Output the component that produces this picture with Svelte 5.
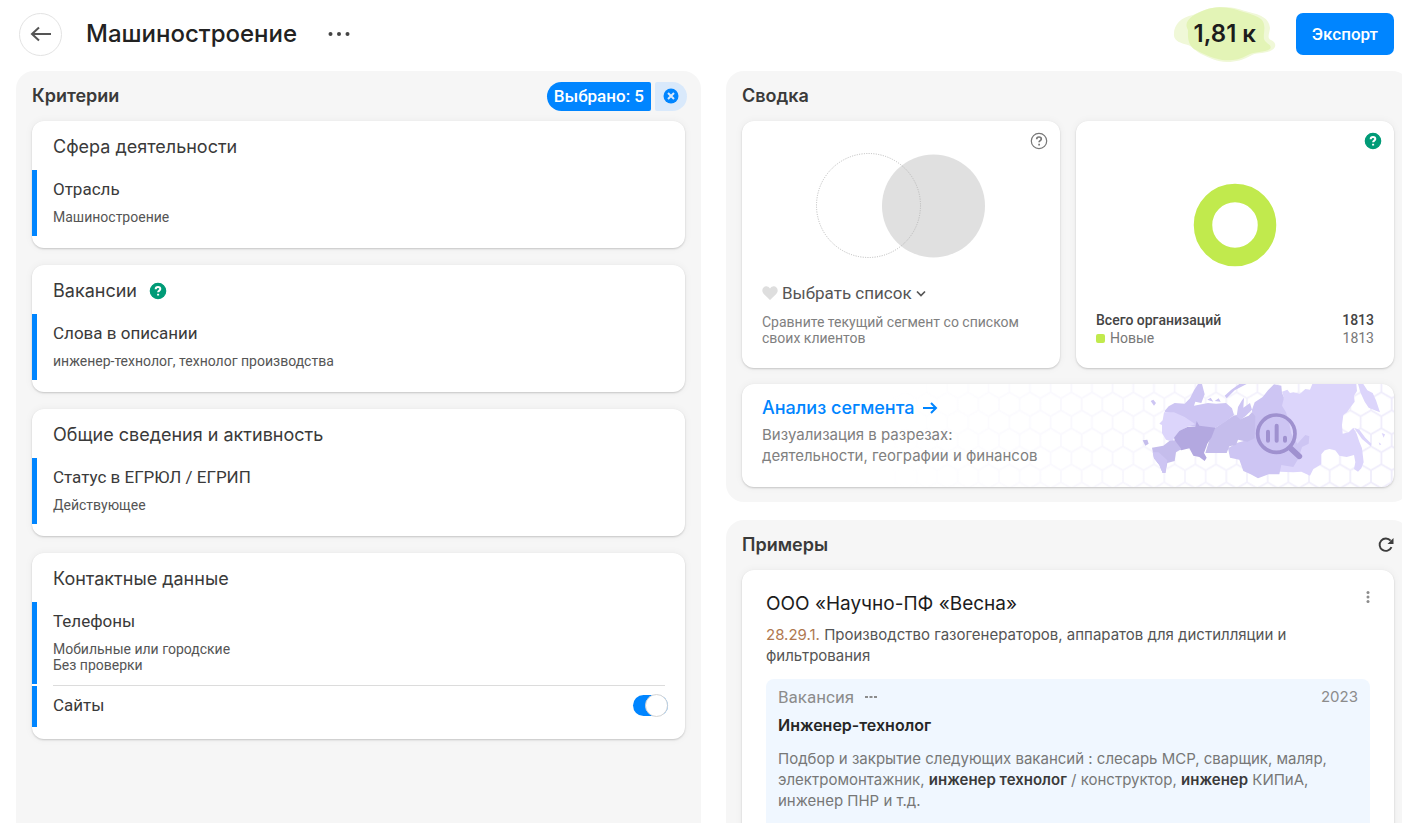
<script>
  let withSites = true;

  const criteria = [
    {
      title: 'Сфера деятельности',
      items: [{ name: 'Отрасль', values: ['Машиностроение'] }]
    },
    {
      title: 'Вакансии',
      help: true,
      items: [{ name: 'Слова в описании', values: ['инженер-технолог, технолог производства'] }]
    },
    {
      title: 'Общие сведения и активность',
      items: [{ name: 'Статус в ЕГРЮЛ / ЕГРИП', values: ['Действующее'] }]
    },
    {
      title: 'Контактные данные',
      items: [
        { name: 'Телефоны', values: ['Мобильные или городские', 'Без проверки'] },
        { name: 'Сайты', toggle: true }
      ]
    }
  ];
</script>

{#snippet helpIcon(filled)}
  <svg class="help" class:filled width="18" height="18" viewBox="0 0 18 18" aria-hidden="true">
    <circle cx="9" cy="9" r="7.7" />
    <path d="M6.7 7.2c0-1.3 1-2.2 2.3-2.2s2.3.8 2.3 2c0 1.6-2.2 1.6-2.2 3.2" />
    <path d="M9.1 11.8v1.7" />
  </svg>
{/snippet}

<div class="page">
  <header>
    <button class="back" aria-label="Назад">
      <svg width="22" height="18" viewBox="0 0 22 18">
        <path d="M21 9H2.5M9 2.5L2 9l7 6.500" />
      </svg>
    </button>
    <h1>Машиностроение</h1>
    <button class="plain dots" aria-label="Ещё">
      <svg width="22" height="6" viewBox="0 0 22 6">
        <circle cx="2.5" cy="3" r="2" /><circle cx="11" cy="3" r="2" /><circle cx="19.5" cy="3" r="2" />
      </svg>
    </button>
    <div class="count">
      <svg width="104" height="56" viewBox="0 0 104 56" aria-hidden="true">
        <path class="blob-light" d="M1 30C0 19 8 11 20 9 32 3 40 1 50 1c12 0 18 3 26 5 12 3 20 6 21 16-1 7-3 10 1 12 5 2 6 7 1 10-6 4-14 2-20 5-9 5-16 7-25 7-10 0-17-4-26-8-6-3-8-7-13-9C7 37 2 35 1 30Z" />
        <path class="blob" d="M15 24C9 14 22 8 32 4c9-4 20-3 29-1 9 3 20 5 27 10 6 6 2 14 3 20 2 5 9 6 6 10-6 4-15 2-22 6-9 5-17 6-26 5-11-2-20-7-28-11-7-6-6-13-6-19Z" />
      </svg>
      <strong>1,81 к</strong>
    </div>
    <button class="export">Экспорт</button>
  </header>

  <main>
    <section class="panel criteria">
      <div class="panel-head">
        <h2>Критерии</h2>
        <div class="selected">
          <button class="selected-count">Выбрано: 5</button>
          <button class="selected-clear" aria-label="Сбросить">
            <svg width="16" height="16" viewBox="0 0 16 16">
              <circle cx="8" cy="8" r="7.5" />
              <path d="M5 5l6 6M11 5l-6 6" />
            </svg>
          </button>
        </div>
      </div>

      <div class="cards">
        {#each criteria as group}
          <article class="card group">
            <h3>
              {group.title}
              {#if group.help}{@render helpIcon(true)}{/if}
            </h3>
            {#each group.items as item}
              {#if item.toggle}
                <div class="item row">
                  <label for="sites">{item.name}</label>
                  <input id="sites" type="checkbox" class="switch" bind:checked={withSites} />
                </div>
              {:else}
                <div class="item">
                  <h4>{item.name}</h4>
                  {#each item.values as value}
                    <p>{value}</p>
                  {/each}
                </div>
              {/if}
            {/each}
          </article>
        {/each}
      </div>
    </section>

    <div class="column">
      <section class="panel">
        <div class="panel-head"><h2>Сводка</h2></div>
        <div class="summary">
          <article class="card compare">
            <button class="plain corner" aria-label="Справка">{@render helpIcon(false)}</button>
            <svg class="venn" width="170" height="106" viewBox="0 0 170 106" aria-hidden="true">
              <circle cx="117.5" cy="53" r="51.5" fill="#e0e0e0" />
              <circle cx="52.5" cy="52.5" r="52" fill="none" stroke="#b8b8b8" stroke-dasharray="1 1.4" />
            </svg>
            <button class="plain pick">
              <svg width="16" height="14" viewBox="0 0 16 14">
                <path fill="#dedede" d="M8 14L2 8.3C-2 4 2-.6 5.2.4 6.6.7 7.5 1.6 8 2.4 8.5 1.6 9.4.7 10.8.4 14-.6 18 4 14 8.3Z" />
              </svg>
              Выбрать список
              <svg width="10" height="7" viewBox="0 0 10 7">
                <path d="M1 1.5L5 5.5l4-4" fill="none" stroke="#555" stroke-width="1.7" />
              </svg>
            </button>
            <p>Сравните текущий сегмент со списком своих клиентов</p>
          </article>

          <article class="card total">
            <button class="plain corner" aria-label="Справка">{@render helpIcon(true)}</button>
            <svg class="donut" width="84" height="84" viewBox="0 0 84 84" aria-hidden="true">
              <circle cx="42" cy="42" r="32" fill="none" stroke="#c1ea4d" stroke-width="18.5" />
            </svg>
            <table>
              <tbody>
                <tr><th scope="row">Всего организаций</th><td>1813</td></tr>
                <tr class="muted"><th scope="row"><i></i>Новые</th><td>1813</td></tr>
              </tbody>
            </table>
          </article>

          <article class="card analysis">
            <svg class="map" width="504" height="103" viewBox="-570 27 1512 309" aria-hidden="true">
              <defs>
                <pattern id="hex" width="62" height="108" patternUnits="userSpaceOnUse" patternTransform="translate(67 34)">
                  <path d="M31 -18V18L0 36V72L31 90V126M31 18L62 36V72L31 90" fill="none" stroke="#eeebfb" stroke-width="5" />
                </pattern>
                <linearGradient id="fade">
                  <stop offset="0" stop-color="#fff" stop-opacity="0" />
                  <stop offset="1" stop-color="#fff" />
                </linearGradient>
                <mask id="fade-mask">
                  <rect x="-570" y="27" width="1512" height="309" fill="url(#fade)" />
                </mask>
              </defs>
              <rect x="-570" y="27" width="1512" height="309" fill="url(#hex)" mask="url(#fade-mask)" />
              <!-- far east -->
              <path fill="#dcd5fb" d="M600 88L612 68 606 50 622 44 630 54 640 52 660 56 676 42 690 44 697 27H829L831 48 822 62 824 80 812 96 801 112 790 120 786 150 788 176 806 172 820 158 830 176 838 200 846 220 851 262 844 280 834 290 822 282 826 262 822 240 800 246 778 242 766 226 748 222 734 226 724 238 724 268 700 282 690 302 664 290 640 292 600 290 590 200Z" />
              <path fill="#dcd5fb" d="M834 27H850L862 46 878 54 888 76 900 112 884 106 866 98 854 80 842 54ZM822 158L838 164 856 188 874 206 872 214 846 192ZM905 174l10 4-4 10zM896 202l8 6-5 3z" />
              <!-- eastern siberia -->
              <path fill="#cdc5f3" d="M516 104L524 82 548 66 564 46 582 28 604 32 606 54 612 68 606 92 618 112 628 146 634 176 652 206 676 180 688 184 686 206 666 216 656 250 640 276 604 270 598 298 566 298 534 310 512 298 490 288 478 254 450 248 444 220 470 204 520 190Z" />
              <!-- western siberia -->
              <path fill="#c5bdec" d="M404 160L436 138 460 122 472 120 482 132 506 122 516 112 526 124 524 190 502 200 474 194 468 210 448 214 440 234 376 234 388 196Z" />
              <!-- north west -->
              <path fill="#cdc5f3" d="M254 108L266 94 284 84 314 86 330 70 342 46 354 27H366L374 58 364 84 346 80 342 92 384 84 408 86 438 84 456 100 462 120 436 140 404 160 320 154 314 128 286 116 256 112ZM434 62L454 44 478 27H500L464 46 440 70ZM470 124L474 96 486 76 492 68 490 98 510 84 516 104 496 124 482 134ZM212 78l8-4 8 10-6 8zM382 74l10-6 8 12zM404 78l12-8 6 10z" />
              <!-- centre -->
              <path fill="#dcd5fb" d="M252 112L282 112 314 126 346 148 320 156 298 172 282 190 278 200 258 194 246 174 246 150 238 146 248 136Z" />
              <!-- volga and ural -->
              <path fill="#b3a8e0" d="M282 188L298 168 322 156 346 156 350 138 358 152 406 158 394 188 382 206 372 234 380 248 374 258 358 246 340 242 328 220 304 226 290 216Z" />
              <!-- south -->
              <path fill="#c5bdec" d="M216 218L250 212 268 198 284 196 304 222 288 232 284 258 262 264 256 294 248 294 238 270 222 250ZM188 196L202 194 206 206 196 212Z" />
              <path fill="#cdc5f3" d="M218 232L236 232 262 256 256 294 248 294 238 270 222 250Z" />
              <g fill="none" stroke="#9f91cf" stroke-linecap="round">
                <circle cx="589" cy="176" r="56" stroke-width="11" />
                <path d="M632 220L658 244" stroke-width="17" />
                <path d="M564 170V197M590 152V197M615 188V197" stroke-width="12" />
              </g>
            </svg>
            <div class="analysis-text">
              <a href="#analysis">
                Анализ сегмента
                <svg width="16" height="14" viewBox="0 0 16 14" aria-hidden="true">
                  <path d="M1 7h13M9 2l5 5-5 5" />
                </svg>
              </a>
              <p>Визуализация в разрезах:<br />деятельности, географии и финансов</p>
            </div>
          </article>
        </div>
      </section>

      <section class="panel">
        <div class="panel-head">
          <h2>Примеры</h2>
          <button class="plain" aria-label="Обновить">
            <svg width="16" height="16" viewBox="0 0 16 16">
              <path d="M13.5 10.2A6.2 6.2 0 1 1 12.6 3.7" fill="none" stroke="#3d3d3d" stroke-width="1.9" />
              <path d="M15.5 1V7H9.5Z" fill="#3d3d3d" />
            </svg>
          </button>
        </div>
        <article class="card example">
          <div class="row">
            <h3>ООО «Научно-ПФ «Весна»</h3>
            <button class="plain more" aria-label="Действия">
              <svg width="4" height="12" viewBox="0 0 4 12" fill="#8c8c8c">
                <circle cx="2" cy="1.5" r="1.5" /><circle cx="2" cy="6" r="1.5" /><circle cx="2" cy="10.5" r="1.5" />
              </svg>
            </button>
          </div>
          <p class="okved"><span>28.29.1.</span> Производство газогенераторов, аппаратов для дистилляции и фильтрования</p>
          <div class="vacancy">
            <div class="row">
              <span class="kind">
                Вакансия
                <svg width="12" height="4" viewBox="0 0 12 4" fill="#8c8c8c" aria-hidden="true">
                  <rect y="1" width="3" height="2" /><rect x="4.5" y="1" width="3" height="2" /><rect x="9" y="1" width="3" height="2" />
                </svg>
              </span>
              <time datetime="2023">2023</time>
            </div>
            <h4>Инженер-технолог</h4>
            <p>
              Подбор и закрытие следующих вакансий : слесарь МСР, сварщик, маляр, электромонтажник,
              <b>инженер технолог</b> / конструктор, <b>инженер</b> КИПиА, инженер ПНР и т.д.
            </p>
          </div>
        </article>
      </section>
    </div>
  </main>
</div>

<style>
  :global(body) {
    margin: 0;
    background: #fff;
  }

  .page {
    height: 100vh;
    display: flex;
    flex-direction: column;
    overflow: hidden;
    font-family: Roboto, "Liberation Sans", sans-serif;
    color: #3a3a3a;
  }

  .page * {
    box-sizing: border-box;
  }

  h1, h2, h3, h4, p {
    margin: 0;
  }

  button {
    font-family: inherit;
    border: 0;
    padding: 0;
    cursor: pointer;
  }

  .plain {
    background: none;
    display: flex;
    align-items: center;
  }

  header {
    display: flex;
    align-items: center;
    height: 71px;
    flex: none;
    padding: 0 24px 3px 19px;
  }

  .back {
    width: 43px;
    height: 43px;
    border: 1px solid #e3e3e3;
    border-radius: 50%;
    background: #fff;
    display: flex;
    align-items: center;
    justify-content: center;
  }

  .back path {
    fill: none;
    stroke: #555;
    stroke-width: 2;
  }

  h1 {
    margin-left: 24px;
    font: 500 24px/32px Inter, sans-serif;
    color: #222;
  }

  .dots {
    margin-left: 31px;
    fill: #444;
  }

  .count {
    display: grid;
    place-items: center;
    margin-left: auto;
    margin-right: 19px;
  }

  .count > * {
    grid-area: 1 / 1;
  }

  .count strong {
    font: 600 24px/32px Inter, sans-serif;
    color: #1c1c1c;
  }

  .blob-light {
    fill: #f0f8d8;
  }

  .blob {
    fill: #e3f4b6;
  }

  .export {
    height: 42px;
    padding: 0 16px;
    border-radius: 7px;
    background: #0085ff;
    color: #fff;
    font-size: 17px;
    font-weight: 500;
  }

  /* the right column runs 8px under the edge of main */
  main {
    flex: 1;
    min-height: 0;
    margin: 0 16px;
    display: grid;
    grid-template-columns: calc(50% - 8px) calc(50% - 9px);
    gap: 25px;
    overflow: hidden;
  }

  .column {
    min-width: 0;
    display: flex;
    flex-direction: column;
    gap: 18px;
  }

  .panel {
    background: #f6f6f6;
    border-radius: 18px;
    padding: 0 16px 15px;
  }

  .criteria {
    border-radius: 18px 18px 0 0;
  }

  .panel-head {
    height: 50px;
    display: flex;
    align-items: center;
    justify-content: space-between;
  }

  h2 {
    font: 600 18px/24px Inter, sans-serif;
    color: #3a3a3a;
  }

  .selected {
    display: flex;
    gap: 4px;
    margin-right: -2px;
  }

  .selected button {
    height: 29px;
  }

  .selected-count {
    padding: 0 7px;
    border-radius: 15px 2px 2px 15px;
    background: #0085ff;
    color: #fff;
    font-size: 17px;
    font-weight: 500;
  }

  .selected-clear {
    width: 32px;
    display: flex;
    align-items: center;
    justify-content: center;
    border-radius: 2px 15px 15px 2px;
    background: #d9e9fb;
  }

  .selected-clear circle {
    fill: #0085ff;
  }

  .selected-clear path {
    stroke: #d9e9fb;
    stroke-width: 2;
  }

  .card {
    background: #fff;
    border-radius: 12px;
    box-shadow: 0 1px 2px rgba(0, 0, 0, 0.18), 0 0 8px rgba(0, 0, 0, 0.05);
  }

  .cards {
    display: flex;
    flex-direction: column;
    gap: 17px;
  }

  .group {
    padding: 14px 0 12px;
  }

  .group h3 {
    display: flex;
    align-items: center;
    gap: 12px;
    padding: 0 21px;
    margin-bottom: 11px;
    font: 400 18px/24px Inter, sans-serif;
  }

  .item {
    padding: 9px 17px 11px 16px;
    border-left: 5px solid #0085ff;
    border-radius: 0 3px 3px 0;
  }

  .item + .item {
    position: relative;
    margin-top: 2px;
  }

  .item + .item::before {
    content: "";
    position: absolute;
    top: -1px;
    left: 16px;
    right: 20px;
    height: 1px;
    background: #dcdcdc;
  }

  .item h4,
  .item label {
    font-size: 17px;
    line-height: 21px;
    font-weight: 400;
  }

  .item h4 {
    margin-bottom: 9px;
  }

  .item p {
    font-size: 14px;
    line-height: 16px;
    color: #555;
  }

  .row {
    display: flex;
    align-items: center;
    justify-content: space-between;
  }

  .switch {
    appearance: none;
    margin: 0;
    width: 35px;
    height: 21px;
    border-radius: 11px;
    background: #c8c8c8;
    display: flex;
    align-items: center;
    cursor: pointer;
  }

  .switch::before {
    content: "";
    width: 23px;
    height: 23px;
    flex: none;
    box-sizing: border-box;
    border: 1px solid #d4d4d4;
    border-radius: 50%;
    background: #fff;
  }

  .switch:checked {
    background: #0085ff;
    justify-content: flex-end;
  }

  .help {
    fill: none;
    stroke: #777;
    stroke-width: 1.2;
  }

  .help path {
    stroke-width: 1.7;
  }

  .help.filled circle {
    fill: #009b77;
    stroke: #009b77;
  }

  .help.filled path {
    stroke: #fff;
    stroke-width: 2;
  }

  .summary {
    display: grid;
    grid-template-columns: 1fr 1fr;
    gap: 16px;
  }

  .compare,
  .total {
    position: relative;
    min-height: 247px;
    padding: 32px 20px 21px;
    display: flex;
    flex-direction: column;
  }

  .corner {
    position: absolute;
    top: 11px;
    right: 12px;
  }

  .venn {
    align-self: center;
    margin-bottom: 22px;
  }

  .pick {
    gap: 4px;
    font-size: 17px;
    line-height: 24px;
    color: #555;
    margin-bottom: 9px;
  }

  .compare p {
    font-size: 14px;
    line-height: 16px;
    color: #808080;
  }

  .donut {
    align-self: center;
    margin-top: 30px;
  }

  table {
    margin-top: auto;
    border-collapse: collapse;
    font-size: 14px;
    line-height: 18px;
  }

  th, td {
    padding: 0;
    font-weight: 500;
    text-align: left;
    color: #444;
  }

  td {
    text-align: right;
  }

  .muted th,
  .muted td {
    font-weight: 400;
    color: #777;
  }

  th i {
    display: inline-block;
    width: 9px;
    height: 9px;
    margin-right: 5px;
    border-radius: 2px;
    background: #c1ea4d;
  }

  .analysis {
    grid-column: 1 / -1;
    position: relative;
    overflow: hidden;
    padding: 12px 20px 21px;
  }

  .map {
    position: absolute;
    top: 0;
    right: 0;
  }

  .analysis-text {
    position: relative;
  }

  .analysis a {
    display: inline-flex;
    align-items: center;
    gap: 8px;
    margin-bottom: 4px;
    font: 500 18px/24px Inter, sans-serif;
    color: #0085ff;
    text-decoration: none;
  }

  .analysis a path {
    fill: none;
    stroke: #0085ff;
    stroke-width: 2;
  }

  .analysis p {
    font: 400 15px/21px Inter, sans-serif;
    color: #808080;
  }

  .example {
    padding: 21px 24px;
  }

  .example h3 {
    font: 400 19px/26px Inter, sans-serif;
    color: #1c1c1c;
  }

  .more {
    align-self: flex-start;
    width: 4px;
  }

  .okved {
    margin: 7px 0 13px;
    font: 400 15px/21px Inter, sans-serif;
    color: #555;
  }

  .okved span {
    color: #b07850;
  }

  .vacancy {
    padding: 6px 12px 24px;
    border-radius: 8px 8px 0 0;
    background: #f0f7ff;
    color: #777;
  }

  .kind {
    display: flex;
    align-items: center;
    gap: 11px;
    font-size: 17px;
    line-height: 24px;
    color: #8c8c8c;
  }

  time {
    font: 400 15px/24px Inter, sans-serif;
    color: #8c8c8c;
  }

  .vacancy h4 {
    margin: 4px 0 11px;
    font: 600 16px/24px Inter, sans-serif;
    color: #262626;
  }

  .vacancy p {
    font: 400 15px/21px Inter, sans-serif;
  }

  .vacancy b {
    font-weight: 600;
    color: #3a3a3a;
  }
</style>
